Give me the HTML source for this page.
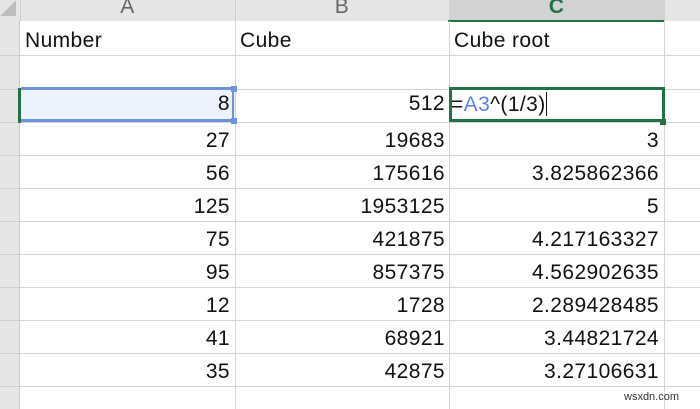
<!DOCTYPE html>
<html><head><style>
body{margin:0;width:700px;height:409px;overflow:hidden;background:#fff;font-family:"Liberation Sans",sans-serif;position:relative}
div{position:absolute;box-sizing:border-box}
.t{font-size:21px;color:#111;white-space:nowrap;letter-spacing:0.4px}
.r{text-align:right}
.hl{height:1px;background:#d4d4d4;left:20px;width:680px}
.vl{width:1px;background:#d4d4d4;top:21px;height:388px}
.rh{left:0;width:20px;height:1px;background:#cfcfcf}
</style></head><body>
<div style="left:0;top:0;width:700px;height:21px;background:#e6e6e6"></div>
<div style="left:0;top:21px;width:20px;height:388px;background:#e6e6e6;border-right:1px solid #c8c8c8"></div>
<div style="left:449px;top:0;width:216px;height:21px;background:#d2d2d2"></div>
<div style="left:448px;top:20px;width:217px;height:2px;background:#217346"></div>
<div style="left:0;top:0;width:16px;height:16px;background:linear-gradient(135deg,#e6e6e6 50%,#bdbdbd 50%)"></div>
<div style="left:20px;top:0;width:1px;height:21px;background:#cfcfcf"></div>
<div style="left:235px;top:0;width:1px;height:21px;background:#cfcfcf"></div>
<div style="left:664px;top:0;width:1px;height:21px;background:#cfcfcf"></div>
<div class="t" style="left:20px;top:-5px;width:215px;text-align:center;color:#666;font-size:21px">A</div>
<div class="t" style="left:235px;top:-5px;width:214px;text-align:center;color:#666;font-size:21px">B</div>
<div class="t" style="left:449px;top:-5px;width:215px;text-align:center;color:#217346;font-size:21px;font-weight:bold">C</div>
<div class="vl" style="left:235px"></div>
<div class="vl" style="left:449px"></div>
<div class="vl" style="left:664px"></div>
<div class="hl" style="top:55px"></div><div class="rh" style="top:55px"></div>
<div class="hl" style="top:89px"></div><div class="rh" style="top:89px"></div>
<div class="hl" style="top:122px"></div><div class="rh" style="top:122px"></div>
<div class="hl" style="top:155px"></div><div class="rh" style="top:155px"></div>
<div class="hl" style="top:188px"></div><div class="rh" style="top:188px"></div>
<div class="hl" style="top:221px"></div><div class="rh" style="top:221px"></div>
<div class="hl" style="top:254px"></div><div class="rh" style="top:254px"></div>
<div class="hl" style="top:287px"></div><div class="rh" style="top:287px"></div>
<div class="hl" style="top:320px"></div><div class="rh" style="top:320px"></div>
<div class="hl" style="top:353px"></div><div class="rh" style="top:353px"></div>
<div class="hl" style="top:386px"></div><div class="rh" style="top:386px"></div>
<div style="left:21px;top:89px;width:214px;height:33px;background:#edf2fc"></div>
<div style="left:18px;top:88px;width:3px;height:35px;background:#217346"></div>
<div style="left:21px;top:87px;width:213px;height:3px;background:#6b91e0"></div>
<div style="left:21px;top:119px;width:213px;height:3px;background:#6b91e0"></div>
<div style="left:231px;top:86px;width:6px;height:6px;background:#6b91e0"></div>
<div style="left:231px;top:118px;width:6px;height:6px;background:#6b91e0"></div>
<div style="left:232px;top:92px;width:2px;height:26px;background:#6b91e0"></div>
<div style="left:449px;top:87px;width:216px;height:35px;border:3px solid #217346"></div>
<div style="left:660px;top:119px;width:6px;height:6px;background:#217346"></div>
<div class="t" style="left:25px;top:29px">Number</div>
<div class="t" style="left:240px;top:29px">Cube</div>
<div class="t" style="left:454px;top:29px">Cube root</div>
<div class="t" style="left:451px;top:92px">=<span style="color:#5b86e0">A3</span>^(1/3)<span style="display:inline-block;width:1px;height:24px;background:#111;vertical-align:-5px"></span></div>
<div class="t r" style="left:20px;width:210px;top:92px">8</div>
<div class="t r" style="left:235px;width:210px;top:92px">512</div>
<div class="t r" style="left:20px;width:210px;top:129px">27</div>
<div class="t r" style="left:235px;width:210px;top:129px">19683</div>
<div class="t r" style="left:449px;width:210px;top:129px">3</div>
<div class="t r" style="left:20px;width:210px;top:162px">56</div>
<div class="t r" style="left:235px;width:210px;top:162px">175616</div>
<div class="t r" style="left:449px;width:210px;top:162px">3.825862366</div>
<div class="t r" style="left:20px;width:210px;top:195px">125</div>
<div class="t r" style="left:235px;width:210px;top:195px">1953125</div>
<div class="t r" style="left:449px;width:210px;top:195px">5</div>
<div class="t r" style="left:20px;width:210px;top:228px">75</div>
<div class="t r" style="left:235px;width:210px;top:228px">421875</div>
<div class="t r" style="left:449px;width:210px;top:228px">4.217163327</div>
<div class="t r" style="left:20px;width:210px;top:261px">95</div>
<div class="t r" style="left:235px;width:210px;top:261px">857375</div>
<div class="t r" style="left:449px;width:210px;top:261px">4.562902635</div>
<div class="t r" style="left:20px;width:210px;top:294px">12</div>
<div class="t r" style="left:235px;width:210px;top:294px">1728</div>
<div class="t r" style="left:449px;width:210px;top:294px">2.289428485</div>
<div class="t r" style="left:20px;width:210px;top:327px">41</div>
<div class="t r" style="left:235px;width:210px;top:327px">68921</div>
<div class="t r" style="left:449px;width:210px;top:327px">3.44821724</div>
<div class="t r" style="left:20px;width:210px;top:360px">35</div>
<div class="t r" style="left:235px;width:210px;top:360px">42875</div>
<div class="t r" style="left:449px;width:210px;top:360px">3.27106631</div>
<div style="left:624px;top:391px;font-size:11px;color:#333">wsxdn.com</div>
</body></html>
